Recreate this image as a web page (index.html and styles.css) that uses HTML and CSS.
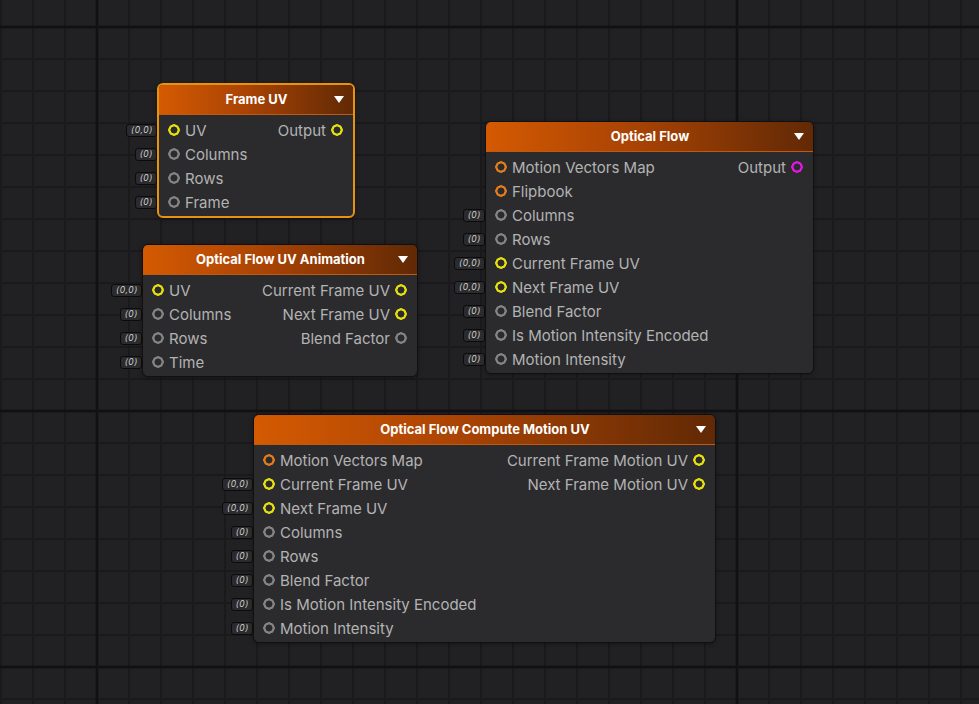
FILE: index.html
```html
<!DOCTYPE html>
<html lang="en">
<head>
<meta charset="utf-8">
<title>Shader Graph</title>
<link rel="stylesheet" href="styles.css">
</head>
<body>
<div class="canvas">

  <div class="node node-frame selected">
    <div class="node-header"><span class="title">Frame UV</span><span class="caret"></span></div>
    <div class="node-body">
      <div class="ports ins">
        <div class="row"><span class="badge">(0,0)</span><span class="port vec2"></span><span class="label">UV</span></div>
        <div class="row"><span class="badge">(0)</span><span class="port float"></span><span class="label">Columns</span></div>
        <div class="row"><span class="badge">(0)</span><span class="port float"></span><span class="label">Rows</span></div>
        <div class="row"><span class="badge">(0)</span><span class="port float"></span><span class="label">Frame</span></div>
      </div>
      <div class="ports outs">
        <div class="row"><span class="label">Output</span><span class="port vec2"></span></div>
      </div>
    </div>
  </div>

  <div class="node node-anim">
    <div class="node-header"><span class="title">Optical Flow UV Animation</span><span class="caret"></span></div>
    <div class="node-body">
      <div class="ports ins">
        <div class="row"><span class="badge">(0,0)</span><span class="port vec2"></span><span class="label">UV</span></div>
        <div class="row"><span class="badge">(0)</span><span class="port float"></span><span class="label">Columns</span></div>
        <div class="row"><span class="badge">(0)</span><span class="port float"></span><span class="label">Rows</span></div>
        <div class="row"><span class="badge">(0)</span><span class="port float"></span><span class="label">Time</span></div>
      </div>
      <div class="ports outs">
        <div class="row"><span class="label">Current Frame UV</span><span class="port vec2"></span></div>
        <div class="row"><span class="label">Next Frame UV</span><span class="port vec2"></span></div>
        <div class="row"><span class="label">Blend Factor</span><span class="port float"></span></div>
      </div>
    </div>
  </div>

  <div class="node node-flow">
    <div class="node-header"><span class="title">Optical Flow</span><span class="caret"></span></div>
    <div class="node-body">
      <div class="ports ins">
        <div class="row"><span class="port tex"></span><span class="label">Motion Vectors Map</span></div>
        <div class="row"><span class="port tex"></span><span class="label">Flipbook</span></div>
        <div class="row"><span class="badge">(0)</span><span class="port float"></span><span class="label">Columns</span></div>
        <div class="row"><span class="badge">(0)</span><span class="port float"></span><span class="label">Rows</span></div>
        <div class="row"><span class="badge">(0,0)</span><span class="port vec2"></span><span class="label">Current Frame UV</span></div>
        <div class="row"><span class="badge">(0,0)</span><span class="port vec2"></span><span class="label">Next Frame UV</span></div>
        <div class="row"><span class="badge">(0)</span><span class="port float"></span><span class="label">Blend Factor</span></div>
        <div class="row"><span class="badge">(0)</span><span class="port float"></span><span class="label">Is Motion Intensity Encoded</span></div>
        <div class="row"><span class="badge">(0)</span><span class="port float"></span><span class="label">Motion Intensity</span></div>
      </div>
      <div class="ports outs">
        <div class="row"><span class="label">Output</span><span class="port vec4"></span></div>
      </div>
    </div>
  </div>

  <div class="node node-compute">
    <div class="node-header"><span class="title">Optical Flow Compute Motion UV</span><span class="caret"></span></div>
    <div class="node-body">
      <div class="ports ins">
        <div class="row"><span class="port tex"></span><span class="label">Motion Vectors Map</span></div>
        <div class="row"><span class="badge">(0,0)</span><span class="port vec2"></span><span class="label">Current Frame UV</span></div>
        <div class="row"><span class="badge">(0,0)</span><span class="port vec2"></span><span class="label">Next Frame UV</span></div>
        <div class="row"><span class="badge">(0)</span><span class="port float"></span><span class="label">Columns</span></div>
        <div class="row"><span class="badge">(0)</span><span class="port float"></span><span class="label">Rows</span></div>
        <div class="row"><span class="badge">(0)</span><span class="port float"></span><span class="label">Blend Factor</span></div>
        <div class="row"><span class="badge">(0)</span><span class="port float"></span><span class="label">Is Motion Intensity Encoded</span></div>
        <div class="row"><span class="badge">(0)</span><span class="port float"></span><span class="label">Motion Intensity</span></div>
      </div>
      <div class="ports outs">
        <div class="row"><span class="label">Current Frame Motion UV</span><span class="port vec2"></span></div>
        <div class="row"><span class="label">Next Frame Motion UV</span><span class="port vec2"></span></div>
      </div>
    </div>
  </div>

</div>
</body>
</html>
```

FILE: styles.css
```css
* { box-sizing: border-box; }

html, body {
  margin: 0;
  padding: 0;
}

body {
  width: 979px;
  height: 704px;
  overflow: hidden;
  font-family: Inter, "Noto Sans", "Liberation Sans", sans-serif;
  background-color: #212124;
}

.canvas {
  position: relative;
  width: 979px;
  height: 704px;
  background-color: #212124;
  background-image:
    /* major vertical lines */
    linear-gradient(to right, transparent 0, #141416 1px, #0e0e10 2px, #141416 3px, transparent 4px),
    linear-gradient(to right, transparent 0, #141416 1px, #0e0e10 2px, #141416 3px, transparent 4px),
    /* major horizontal lines */
    linear-gradient(to bottom, transparent 0, #141416 1px, #0e0e10 2px, #141416 3px, transparent 4px),
    linear-gradient(to bottom, transparent 0, #141416 1px, #0e0e10 2px, #141416 3px, transparent 4px),
    linear-gradient(to bottom, transparent 0, #141416 1px, #0e0e10 2px, #141416 3px, transparent 4px),
    /* minor grid */
    linear-gradient(to right, #1a1a1c 0, #1a1a1c 2px, transparent 2px),
    linear-gradient(to bottom, #1a1a1c 0, #1a1a1c 2px, transparent 2px);
  background-repeat:
    no-repeat, no-repeat,
    no-repeat, no-repeat, no-repeat,
    repeat, repeat;
  background-size:
    4px 100%, 4px 100%,
    100% 4px, 100% 4px, 100% 4px,
    32px 100%, 100% 32px;
  background-position:
    95px 0, 735px 0,
    0 25px, 0 409px, 0 665px,
    0 0, 0 26px;
}

/* ---------- nodes ---------- */
.node {
  position: absolute;
  background: #2b2b2e;
  border: 1px solid #101011;
  border-radius: 6px;
  box-shadow: 0 1px 4px rgba(0, 0, 0, 0.35);
}

.node.selected {
  border: 2px solid #e8930d;
}

.node-frame   { left: 157px; top: 83px;  width: 198px; }
.node-anim    { left: 142px; top: 244px; width: 276px; }
.node-flow    { left: 485px; top: 121px; width: 329px; }
.node-compute { left: 253px; top: 414px; width: 463px; }

.node-header {
  height: 30px;
  display: grid;
  grid-template-columns: 1fr auto 1fr;
  align-items: center;
  padding: 0 9px 0 10px;
  background: linear-gradient(to right, #d45a02 0%, #a94304 45%, #612905 100%);
  border-bottom: 1px solid #c1590f;
  border-radius: 5px 5px 0 0;
}

.selected .node-header {
  border-radius: 4px 4px 0 0;
}

.title {
  grid-column: 2;
  color: #ffffff;
  font-size: 13px;
  font-weight: 700;
  white-space: nowrap;
  line-height: 1;
}

.caret {
  grid-column: 3;
  justify-self: end;
  width: 0;
  height: 0;
  border-left: 5px solid transparent;
  border-right: 5px solid transparent;
  border-top: 7px solid #ffffff;
}

.node-body {
  display: flex;
  justify-content: space-between;
  padding: 3px 0 2px;
}

.ports {
  display: flex;
  flex-direction: column;
}

.outs {
  align-items: flex-end;
}

.row {
  position: relative;
  height: 24px;
  display: flex;
  align-items: center;
  gap: 5px;
  white-space: nowrap;
}

.ins .row { padding-left: 9px; }
.outs .row { padding-right: 10px; gap: 5px; }

.label {
  color: #b3b3b3;
  font-size: 15px;
  line-height: 1;
  padding-top: 1px;
}

.port {
  --c: #828282;
  flex: none;
  width: 12px;
  height: 12px;
  border-radius: 50%;
  background: radial-gradient(circle closest-side, transparent 0, transparent 55%, var(--c) 62%, var(--c) 93%, transparent 100%);
}

.port.vec2  { --c: #e6df0e; }
.port.float { --c: #838383; }
.port.tex   { --c: #e27b1c; }
.port.vec4  { --c: #e116e1; }

/* inline default-value badges hanging off the left of a node */
.badge {
  position: absolute;
  right: calc(100% + 1px);
  top: 6px;
  height: 13px;
  padding: 0 3px 0 4px;
  display: flex;
  align-items: center;
  background: #2b2b2d;
  border: 1px solid #0b0b0c;
  border-radius: 3px;
  color: #d2d2d2;
  font-size: 8.5px;
  font-style: italic;
  letter-spacing: 0.6px;
  line-height: 1;
}

.selected .badge {
  right: calc(100% + 2px);
}
```
